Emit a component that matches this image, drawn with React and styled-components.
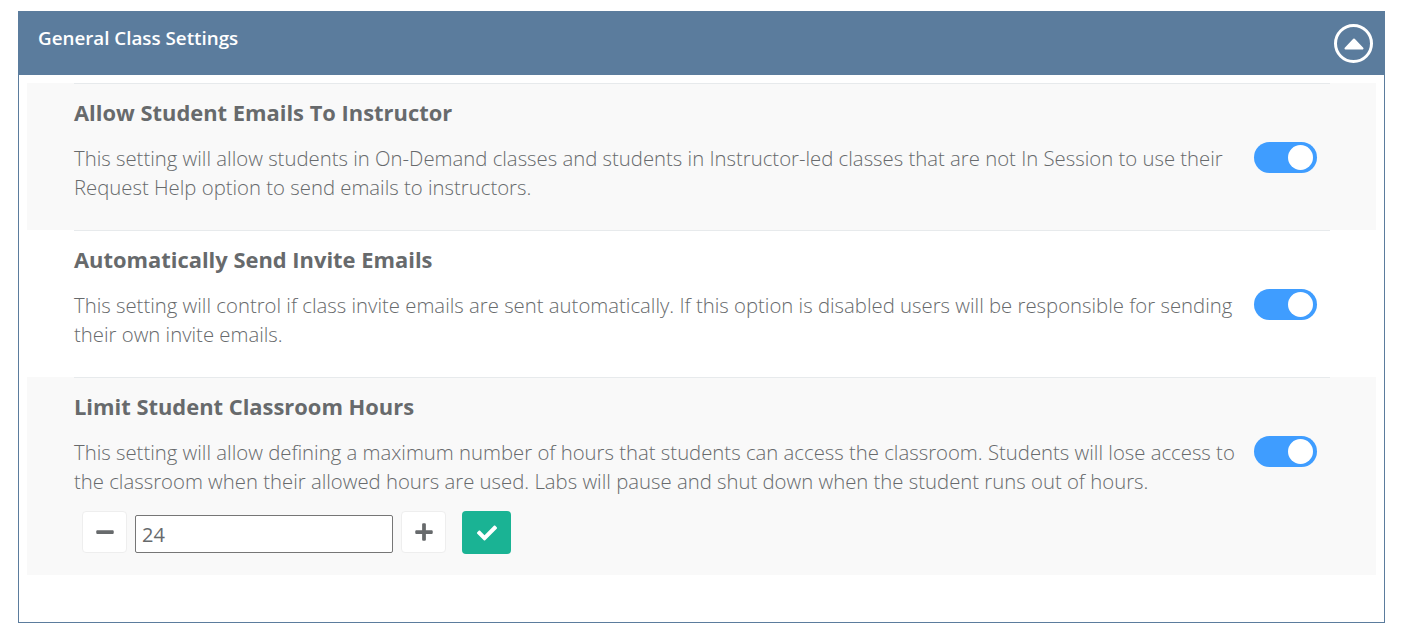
import React, { useState } from "react";
import styled, { createGlobalStyle } from "styled-components";
import { FaCheck, FaMinus, FaPlus } from "react-icons/fa";

const settings = [
  {
    id: "emails",
    title: "Allow Student Emails To Instructor",
    text: "This setting will allow students in On-Demand classes and students in Instructor-led classes that are not In Session to use their Request Help option to send emails to instructors.",
    shaded: true,
  },
  {
    id: "invites",
    title: "Automatically Send Invite Emails",
    text: "This setting will control if class invite emails are sent automatically. If this option is disabled users will be responsible for sending their own invite emails.",
  },
  {
    id: "hours",
    title: "Limit Student Classroom Hours",
    text: "This setting will allow defining a maximum number of hours that students can access the classroom. Students will lose access to the classroom when their allowed hours are used. Labs will pause and shut down when the student runs out of hours.",
    shaded: true,
    stepper: true,
  },
];

function App() {
  const [hours, setHours] = useState(24);
  return (
    <>
      <GlobalStyle />
      <Panel>
        <Header>
          <HeaderTitle>General Class Settings</HeaderTitle>
          <Collapse aria-label="Collapse">
            <svg width="20" height="12" viewBox="0 0 20 12">
              <path
                d="M10 1.5 L18.5 10.5 H1.5 Z"
                fill="#fff"
                stroke="#fff"
                strokeWidth="2"
                strokeLinejoin="round"
              />
            </svg>
          </Collapse>
        </Header>
        <Body>
          {settings.map((item) => (
            <Row key={item.id} $shaded={item.shaded} $tall={item.stepper}>
              <RowInner>
                <RowTitle>{item.title}</RowTitle>
                <RowMain>
                  <RowText>{item.text}</RowText>
                  <Toggle />
                </RowMain>
                {item.stepper && (
                  <Stepper>
                    <StepButton onClick={() => setHours(hours - 1)}>
                      <FaMinus size={20} />
                    </StepButton>
                    <HoursInput
                      value={hours}
                      onChange={(e) => setHours(e.target.value)}
                    />
                    <StepButton onClick={() => setHours(hours + 1)}>
                      <FaPlus size={20} />
                    </StepButton>
                    <SaveButton aria-label="Save">
                      <FaCheck size={20} />
                    </SaveButton>
                  </Stepper>
                )}
              </RowInner>
            </Row>
          ))}
        </Body>
      </Panel>
    </>
  );
}

const GlobalStyle = createGlobalStyle`
  html, body {
    margin: 0;
    padding: 0;
    background: #fff;
  }
  body {
    font-family: "Open Sans", "Liberation Sans", sans-serif;
    color: #676a6c;
  }
`;

const Panel = styled.section`
  box-sizing: border-box;
  width: 1367px;
  height: 612px;
  margin: 11px 0 0 18px;
  border: 1px solid #5b7c9d;
`;

const Header = styled.header`
  box-sizing: border-box;
  height: 63px;
  margin: 0 -1px;
  padding: 0 12px 0 20px;
  display: flex;
  justify-content: space-between;
  align-items: center;
  background: #5b7c9d;
`;

const HeaderTitle = styled.h2`
  margin: 0 0 10px;
  font-size: 18.8px;
  line-height: 25px;
  font-weight: 600;
  color: #fff;
`;

const Collapse = styled.button`
  box-sizing: border-box;
  width: 39px;
  height: 39px;
  padding: 0;
  display: flex;
  justify-content: center;
  align-items: center;
  background: transparent;
  border: 3px solid #fff;
  border-radius: 50%;
`;

const Body = styled.div`
  padding: 8px 8px 0;
`;

const Row = styled.div`
  box-sizing: border-box;
  height: ${(p) => (p.$tall ? "198px" : "147px")};
  padding: 0 46px 0 47px;
  background: ${(p) => (p.$shaded ? "#f9f9f9" : "#fff")};
`;

const RowInner = styled.div`
  height: 100%;
  box-sizing: border-box;
  border-top: 1px solid #e7eaec;
  padding-top: 14px;
`;

const RowTitle = styled.h3`
  margin: 0 0 16px;
  font-size: 21.9px;
  line-height: 30px;
  font-weight: 700;
  color: #676a6c;
`;

const RowMain = styled.div`
  display: flex;
  align-items: flex-start;
  justify-content: space-between;
  padding-right: 13px;
`;

const RowText = styled.p`
  width: 1164px;
  margin: 0;
  font-size: 20.32px;
  line-height: 29px;
  font-weight: 300;
  color: #676a6c;
`;

const Toggle = styled.span`
  position: relative;
  flex: none;
  display: block;
  width: 63px;
  height: 31px;
  margin-top: -2px;
  border-radius: 16px;
  background: #3f9dff;

  &::after {
    content: "";
    position: absolute;
    top: 3px;
    right: 4px;
    width: 25px;
    height: 25px;
    border-radius: 50%;
    background: #fff;
  }
`;

const Stepper = styled.div`
  display: flex;
  align-items: flex-start;
  margin: 15px 0 0 8px;
`;

const StepButton = styled.button`
  box-sizing: border-box;
  width: 45px;
  height: 42px;
  padding: 0;
  display: flex;
  justify-content: center;
  align-items: center;
  color: #676a6c;
  background: #fff;
  border: 1px solid #eeeeee;
  border-radius: 4px;
`;

const HoursInput = styled.input`
  box-sizing: border-box;
  width: 258px;
  height: 38px;
  margin: 4px 8px 0;
  padding: 1px 6px 0;
  font-family: inherit;
  font-size: 20px;
  color: #676a6c;
  background: #fff;
  border: 1px solid #767676;
  border-radius: 2px;
  outline: none;
`;

const SaveButton = styled.button`
  box-sizing: border-box;
  width: 49px;
  height: 43px;
  margin-left: 16px;
  padding: 0;
  display: flex;
  justify-content: center;
  align-items: center;
  color: #fff;
  background: #1ab394;
  border: none;
  border-radius: 4px;
`;

export default App;
